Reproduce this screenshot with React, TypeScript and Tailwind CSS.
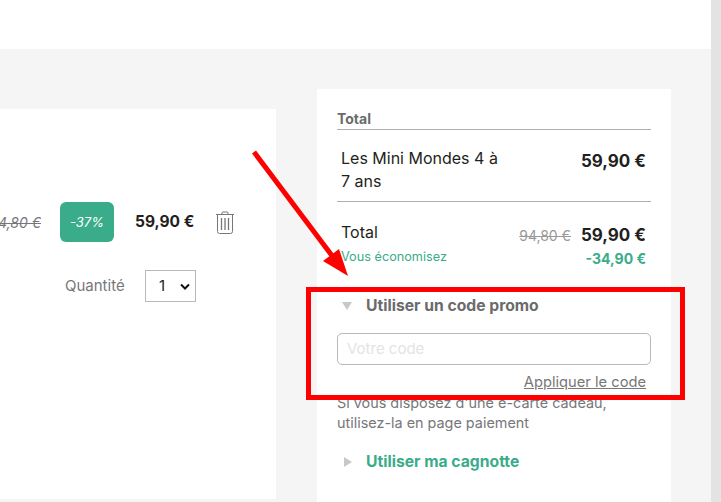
function Trash() {
  return (
    <svg width="20" height="24" viewBox="0 0 20 24" fill="none" stroke="#77777a" strokeWidth="1">
      <path d="M1 3.500H19" />
      <path d="M7 3.500V2a1 1 0 0 1 1-1h4a1 1 0 0 1 1 1v1.500" />
      <path d="M2.500 3.500V20.500a2 2 0 0 0 2 2h11a2 2 0 0 0 2-2V3.500" />
      <path d="M6.500 7V19M10 7V19M13.500 7V19" strokeWidth="1.300" />
    </svg>
  );
}

export default function App() {
  return (
    <div className="relative flex h-[502px] w-[721px] overflow-hidden bg-white font-['Inter',sans-serif]">
      <div className="flex w-[711px] flex-col">
        <div className="h-[49px] bg-white" />
        <div className="flex flex-1 items-start bg-[#f5f5f5] pt-10">
          <div className="mt-5 flex h-[390px] w-[276px] flex-col bg-white">
            <div className="mt-[93px] flex h-[40px] items-center">
              <div className="flex w-[41px] justify-end overflow-hidden">
                <span className="shrink-0 whitespace-nowrap text-[14px] italic text-[#77777a] line-through">94,80 €</span>
              </div>
              <span className="ml-[19px] flex h-[40px] w-[54px] items-center justify-center rounded-[6px] bg-[#3aac8a] pt-[1px] text-[13px] italic text-white">-37%</span>
              <span className="ml-[21px] w-[60px] whitespace-nowrap text-[15.500px] font-bold text-[#231f20]">59,90 €</span>
              <span className="ml-[20px] mt-[2px]"><Trash /></span>
            </div>
            <div className="mt-[28px] flex h-[32px] items-center">
              <span className="ml-[65px] w-[80px] text-[15px] text-[#77777a]">Quantité</span>
              <div className="flex h-[32px] w-[51px] items-center justify-between border border-[#b9b9b9] pl-[13px] pr-[5px] text-[15px] text-[#231f20]">
                <span>1</span>
                <svg width="10" height="7" viewBox="0 0 10 7" fill="none" stroke="#111" strokeWidth="2"><path d="M1 1.500L5 5.500L9 1.500" /></svg>
              </div>
            </div>
          </div>
          <div className="ml-[41px] flex h-[413px] w-[354px] flex-col bg-white px-5 pt-[21px]">
            <div className="border-b border-[#b0b0b0] pb-[1px] text-[14px] font-bold leading-[18px] text-[#6b6b6b]">Total</div>
            <div className="flex h-[72px] items-start justify-between border-b border-[#b0b0b0] pl-1 pr-[5px] pt-[17px]">
              <span className="w-[165px] text-[16px] leading-[23px] text-[#231f20]">Les Mini Mondes 4 à 7 ans</span>
              <span className="mt-[2px] text-[17px] font-bold leading-[24px] text-[#231f20]">59,90 €</span>
            </div>
            <div className="flex justify-between pl-1 pr-[5px] pt-[19px]">
              <div className="flex flex-col">
                <span className="text-[16px] leading-[23px] text-[#231f20]">Total</span>
                <span className="mt-[3px] text-[12.700px] leading-[20px] text-[#3aac8a]">Vous économisez</span>
              </div>
              <div className="flex flex-col items-end">
                <div className="mt-[2px] flex items-center gap-[10px]">
                  <span className="text-[14px] text-[#999] line-through">94,80 €</span>
                  <span className="text-[17px] font-bold leading-[24px] text-[#231f20]">59,90 €</span>
                </div>
                <span className="mt-[2px] text-[14px] font-bold leading-[20px] text-[#3aac8a]">-34,90 €</span>
              </div>
            </div>
            <div className="mt-[26px] flex items-center">
              <svg width="10" height="8" viewBox="0 0 10 8" className="ml-[5px]"><path d="M0 0H10L5 8Z" fill="#c8c8c8" /></svg>
              <span className="ml-[14px] text-[15.700px] font-bold leading-[22px] text-[#6b6b6b]">Utiliser un code promo</span>
            </div>
            <div className="mt-[16px] flex h-[32px] items-center rounded-[5px] border border-[#b9b9b9] px-[9px] text-[15px] text-[#e4e4e4]">Votre code</div>
            <div className="mt-[7px] pr-[5px] text-right text-[14.700px] leading-[20px] text-[#77777a] underline">Appliquer le code</div>
            <div className="mt-[1px] w-[290px] text-[14.400px] leading-[20px] text-[#77777a]">Si vous disposez d'une e-carte cadeau, utilisez-la en page paiement</div>
            <div className="mt-[18px] flex items-center">
              <svg width="8" height="10" viewBox="0 0 8 10" className="ml-[7px]"><path d="M0 0L8 5L0 10Z" fill="#c8c8c8" /></svg>
              <span className="ml-[14px] text-[15.700px] font-bold leading-[22px] text-[#3aac8a]">Utiliser ma cagnotte</span>
            </div>
          </div>
        </div>
      </div>
      <div className="h-full w-[10px] bg-[#e3e3e3]" />
      <div className="absolute left-[306px] top-[287px] h-[113px] w-[379px] border-[5px] border-[#ff0000]" />
      <svg className="absolute left-0 top-0" width="721" height="502" viewBox="0 0 721 502" fill="none">
        <path d="M254 152L333 257" stroke="#ff0000" strokeWidth="5" />
        <path d="M348 276L323 261L339 249Z" fill="#ff0000" />
      </svg>
    </div>
  );
}
